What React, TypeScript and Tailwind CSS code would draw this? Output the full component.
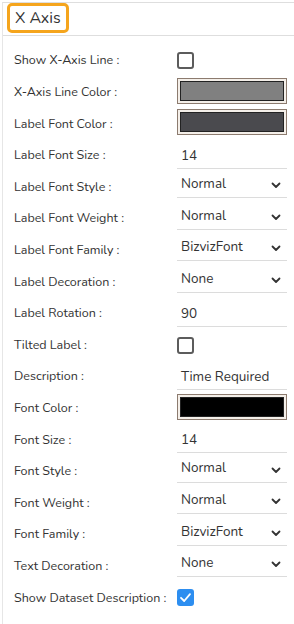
import React from 'react';

type Row =
  | { label: string; kind: 'check'; checked?: boolean }
  | { label: string; kind: 'color'; color: string }
  | { label: string; kind: 'text'; value: string }
  | { label: string; kind: 'select'; value: string };

const rows: Row[] = [
  { label: 'Show X-Axis Line :', kind: 'check' },
  { label: 'X-Axis Line Color :', kind: 'color', color: '#808080' },
  { label: 'Label Font Color :', kind: 'color', color: '#4a4a4e' },
  { label: 'Label Font Size :', kind: 'text', value: '14' },
  { label: 'Label Font Style :', kind: 'select', value: 'Normal' },
  { label: 'Label Font Weight :', kind: 'select', value: 'Normal' },
  { label: 'Label Font Family :', kind: 'select', value: 'BizvizFont' },
  { label: 'Label Decoration :', kind: 'select', value: 'None' },
  { label: 'Label Rotation :', kind: 'text', value: '90' },
  { label: 'Tilted Label :', kind: 'check' },
  { label: 'Description :', kind: 'text', value: 'Time Required' },
  { label: 'Font Color :', kind: 'color', color: '#000000' },
  { label: 'Font Size :', kind: 'text', value: '14' },
  { label: 'Font Style :', kind: 'select', value: 'Normal' },
  { label: 'Font Weight :', kind: 'select', value: 'Normal' },
  { label: 'Font Family :', kind: 'select', value: 'BizvizFont' },
  { label: 'Text Decoration :', kind: 'select', value: 'None' },
  { label: 'Show Dataset Description :', kind: 'check', checked: true },
];

const Chevron = () => (
  <svg className="w-[10px] h-[7px]" viewBox="0 0 10 7" fill="none">
    <path d="M1.5 1.5 L5 5 L8.5 1.5" stroke="#333" strokeWidth="1.8" strokeLinecap="round" strokeLinejoin="round" />
  </svg>
);

const Control: React.FC<{ row: Row }> = ({ row }) => {
  if (row.kind === 'check') {
    return row.checked ? (
      <div className="w-[17px] h-[17px] rounded-[3px] bg-[#2d8ef0] flex items-center justify-center">
        <svg className="w-[13px] h-[13px]" viewBox="0 0 13 13" fill="none">
          <path d="M2 6.8 L5.2 10 L11 3.2" stroke="#fff" strokeWidth="1.8" strokeLinecap="round" strokeLinejoin="round" />
        </svg>
      </div>
    ) : (
      <div className="w-[17px] h-[17px] rounded-[3px] border-2 border-[#5c5c5c] bg-white" />
    );
  }
  if (row.kind === 'color') {
    return (
      <div className="w-[110px] h-[26px] border border-[#8c7b6f] bg-[#f4efe9] p-[2px] -mt-[3px]">
        <div className="w-full h-full border border-[#222]" style={{ backgroundColor: row.color }} />
      </div>
    );
  }
  if (row.kind === 'text') {
    return (
      <div className="w-[110px] h-[24px] border-b border-[#dcdcdc] flex items-center pl-[4px] text-[13.5px] text-[#333] translate-y-[1px]">
        {row.value}
      </div>
    );
  }
  return (
    <div className="w-[110px] h-[24px] border-b border-[#dcdcdc] flex items-center justify-between pl-[4px] pr-[6px] text-[13.5px] text-[#333] -translate-y-[1px]">
      <span className="-mt-[3px]">{row.value}</span>
      <Chevron />
    </div>
  );
};

export default function App() {
  return (
    <div
      className="w-[294px] h-[624px] bg-white overflow-hidden"
      style={{ fontFamily: 'Nunito, Lato, "Open Sans", sans-serif' }}
    >
      <div className="mt-[2px] border-t border-[#dedede] border-l border-l-[#e6e6e6] ml-[2px] h-[622px]">
        <div className="h-[33px] border-b border-[#dedede] flex items-start pl-[4px]">
          <div className="h-[30px] px-[5px] border-[3px] border-[#f5a51d] rounded-[5px] flex items-center whitespace-nowrap text-[16px] text-[#333]">
            X Axis
          </div>
        </div>
        <div className="pt-[9px]">
          {rows.map((row) => (
            <div key={row.label} className="h-[31.6px] flex items-center">
              <div className="w-[174px] pl-[11px] text-[12.5px] text-[#333]">{row.label}</div>
              <Control row={row} />
            </div>
          ))}
        </div>
      </div>
    </div>
  );
}
